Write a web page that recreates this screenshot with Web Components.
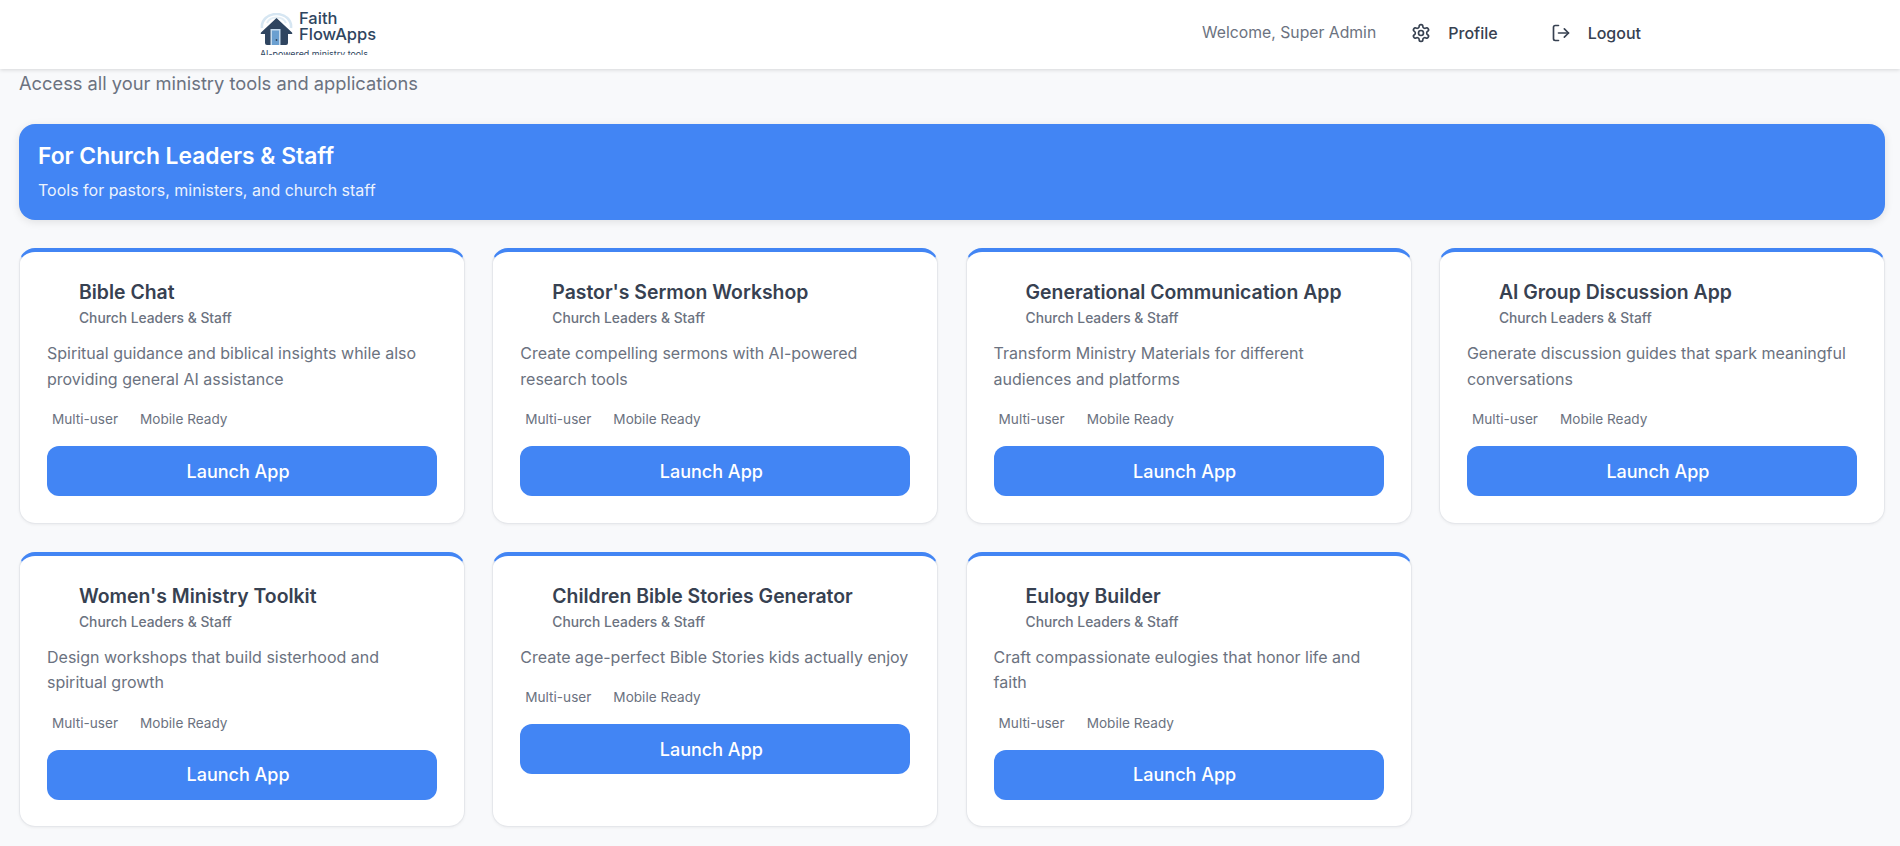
<!DOCTYPE html>
<html lang="en">
<head>
<meta charset="utf-8">
<title>Faith FlowApps</title>
<style>
  html, body {
    margin: 0;
    padding: 0;
    background: #f8f9fb;
    font-family: Inter, "Liberation Sans", sans-serif;
  }
</style>
</head>
<body>
<app-header></app-header>
<app-main>
  <section-banner heading="For Church Leaders &amp; Staff" sub="Tools for pastors, ministers, and church staff"></section-banner>
  <app-card name="Bible Chat" desc="Spiritual guidance and biblical insights while also providing general AI assistance"></app-card>
  <app-card name="Pastor's Sermon Workshop" desc="Create compelling sermons with AI-powered research tools"></app-card>
  <app-card name="Generational Communication App" desc="Transform Ministry Materials for different audiences and platforms"></app-card>
  <app-card name="AI Group Discussion App" desc="Generate discussion guides that spark meaningful conversations"></app-card>
  <app-card name="Women's Ministry Toolkit" desc="Design workshops that build sisterhood and spiritual growth"></app-card>
  <app-card name="Children Bible Stories Generator" desc="Create age-perfect Bible Stories kids actually enjoy"></app-card>
  <app-card name="Eulogy Builder" desc="Craft compassionate eulogies that honor life and faith"></app-card>
</app-main>

<script>
class AppHeader extends HTMLElement {
  constructor() {
    super();
    this.shadowDOM = this.attachShadow({ mode: 'open' });
  }

  connectedCallback() {
    this.shadowDOM.innerHTML = `
      <style>
        :host {
          display: block;
          position: relative;
          z-index: 2;
          height: 69px;
          background: #fff;
          box-shadow: 0 1px 4px rgba(0, 0, 0, 0.14);
        }
        .inner {
          box-sizing: border-box;
          max-width: 1400px;
          height: 100%;
          margin: 0 auto;
          padding: 0 9px 4px 10px;
          display: flex;
          align-items: center;
          justify-content: space-between;
        }
        .logo {
          display: flex;
          align-items: flex-start;
          align-self: flex-start;
          position: relative;
          box-sizing: border-box;
          width: 130px;
          height: 55px;
          padding-top: 13px;
          overflow: hidden;
        }
        .logo svg { width: 33px; height: 33px; flex: none; }
        .brand {
          margin: -5px 0 0 6px;
          font-size: 16.500px;
          line-height: 16px;
          font-weight: 500;
          color: #2f4560;
          padding-top: 2px;
        }
        .tag {
          position: absolute;
          left: 0;
          top: 48px;
          font-size: 8.900px;
          line-height: 11px;
          color: #2f4560;
          white-space: nowrap;
        }
        nav { display: flex; align-items: center; }
        .welcome { font-size: 15.750px; color: #6b7280; margin-right: 35px; }
        a {
          display: flex;
          align-items: center;
          gap: 17px;
          font-size: 16px;
          font-weight: 500;
          color: #374151;
          text-decoration: none;
        }
        a + a { margin-left: 53px; }
        a svg {
          width: 20px;
          height: 20px;
          fill: none;
          stroke: #374151;
          stroke-width: 2;
          stroke-linecap: round;
          stroke-linejoin: round;
        }
      </style>
      <div class="inner">
        <div class="logo">
          <svg viewBox="0 0 33 33">
            <path d="M2 15C1 7 8 1 16.500 1S32 7 31 15" fill="none" stroke="#d6e6f2" stroke-width="2.500"/>
            <path d="M7 10C8.500 6.500 12 4.500 16.500 4.500S24.500 6.500 26 10" fill="none" stroke="#e2edf5" stroke-width="2"/>
            <path d="M16.500 5 32 19.500Q33 21 31 21H28V30Q28 32 26 32H7Q5 32 5 30V21H2Q0 21 1 19.500Z" fill="#2f4560"/>
            <rect x="10.500" y="16" width="10" height="16" fill="#c6dbee"/>
            <rect x="12" y="17.500" width="7" height="14.500" fill="#6a9fd0"/>
            <circle cx="16.500" cy="27" r="0.900" fill="#2f4560"/>
          </svg>
          <div class="brand">Faith<br>FlowApps</div>
          <div class="tag">AI-powered ministry tools</div>
        </div>
        <nav>
          <span class="welcome">Welcome, Super Admin</span>
          <a href="#">
            <svg viewBox="0 0 24 24"><path d="M12.22 2h-.44a2 2 0 0 0-2 2v.18a2 2 0 0 1-1 1.73l-.43.25a2 2 0 0 1-2 0l-.15-.08a2 2 0 0 0-2.73.73l-.22.38a2 2 0 0 0 .73 2.73l.15.1a2 2 0 0 1 1 1.72v.51a2 2 0 0 1-1 1.74l-.15.09a2 2 0 0 0-.73 2.73l.22.38a2 2 0 0 0 2.73.73l.15-.08a2 2 0 0 1 2 0l.43.25a2 2 0 0 1 1 1.73V20a2 2 0 0 0 2 2h.44a2 2 0 0 0 2-2v-.18a2 2 0 0 1 1-1.73l.43-.25a2 2 0 0 1 2 0l.15.08a2 2 0 0 0 2.73-.73l.22-.39a2 2 0 0 0-.73-2.73l-.15-.08a2 2 0 0 1-1-1.74v-.5a2 2 0 0 1 1-1.74l.15-.09a2 2 0 0 0 .73-2.73l-.22-.38a2 2 0 0 0-2.73-.73l-.15.08a2 2 0 0 1-2 0l-.43-.25a2 2 0 0 1-1-1.73V4a2 2 0 0 0-2-2z"/><circle cx="12" cy="12" r="3"/></svg>
            Profile
          </a>
          <a href="#">
            <svg viewBox="0 0 24 24"><path d="M9 21H5a2 2 0 0 1-2-2V5a2 2 0 0 1 2-2h4"/><path d="m16 17 5-5-5-5"/><path d="M21 12H9"/></svg>
            Logout
          </a>
        </nav>
      </div>`;
  }
}

class AppMain extends HTMLElement {
  constructor() {
    super();
    this.shadowDOM = this.attachShadow({ mode: 'open' });
  }

  connectedCallback() {
    this.shadowDOM.innerHTML = `
      <style>
        :host {
          display: block;
          padding: 2px 15px 19px 19px;
        }
        p {
          margin: 0 0 29px;
          font-size: 18.300px;
          line-height: 24px;
          color: #6b7280;
        }
        .grid {
          display: grid;
          grid-template-columns: repeat(4, 1fr);
          gap: 28px 27.200px;
        }
        ::slotted(section-banner) { grid-column: 1 / -1; }
      </style>
      <p>Access all your ministry tools and applications</p>
      <div class="grid"><slot></slot></div>`;
  }
}

class SectionBanner extends HTMLElement {
  constructor() {
    super();
    this.shadowDOM = this.attachShadow({ mode: 'open' });
  }

  connectedCallback() {
    this.shadowDOM.innerHTML = `
      <style>
        :host {
          display: block;
          box-sizing: border-box;
          height: 96px;
          padding: 16px 19px;
          border-radius: 16px;
          background: #4285f4;
          color: #fff;
          box-shadow: 0 2px 8px rgba(0, 0, 0, 0.1);
        }
        h2 { margin: 0 0 8px; font-size: 22.800px; line-height: 32px; font-weight: 600; }
        div { font-size: 16px; line-height: 20px; opacity: 0.9; }
      </style>
      <h2>${this.getAttribute('heading')}</h2>
      <div>${this.getAttribute('sub')}</div>`;
  }
}

class AppCard extends HTMLElement {
  constructor() {
    super();
    this.shadowDOM = this.attachShadow({ mode: 'open' });
  }

  connectedCallback() {
    this.shadowDOM.innerHTML = `
      <style>
        :host {
          display: flex;
          flex-direction: column;
          box-sizing: border-box;
          padding: 27px 27px 26.400px;
          background: #fff;
          border: 1px solid #e5e7eb;
          border-top: 4px solid #4285f4;
          border-radius: 16px;
          box-shadow: 0 1px 3px rgba(0, 0, 0, 0.05);
        }
        h3 {
          margin: 0 0 0 32px;
          font-size: 19.400px;
          line-height: 26px;
          font-weight: 600;
          color: #374151;
        }
        .who {
          margin: 0 0 0 32px;
          padding-top: 3px;
          font-size: 13.800px;
          line-height: 20px;
          font-weight: 500;
          color: #6b7280;
        }
        .desc {
          margin: 13px 0 17px;
          font-size: 16px;
          line-height: 25.600px;
          color: #6b7280;
        }
        .tags {
          display: flex;
          gap: 22px;
          padding-left: 5px;
          margin-bottom: 17px;
          font-size: 13.600px;
          line-height: 20px;
          color: #6b7280;
        }
        button {
          height: 50px;
          padding: 0 8px 0 0;
          border: 0;
          border-radius: 12px;
          background: #4285f4;
          color: #fff;
          font-family: inherit;
          font-size: 18px;
          font-weight: 500;
        }
      </style>
      <h3>${this.getAttribute('name')}</h3>
      <div class="who">Church Leaders &amp; Staff</div>
      <div class="desc">${this.getAttribute('desc')}</div>
      <div class="tags"><span>Multi-user</span><span>Mobile Ready</span></div>
      <button type="button">Launch App</button>`;
  }
}

customElements.define('app-header', AppHeader);
customElements.define('app-main', AppMain);
customElements.define('section-banner', SectionBanner);
customElements.define('app-card', AppCard);
</script>
</body>
</html>
